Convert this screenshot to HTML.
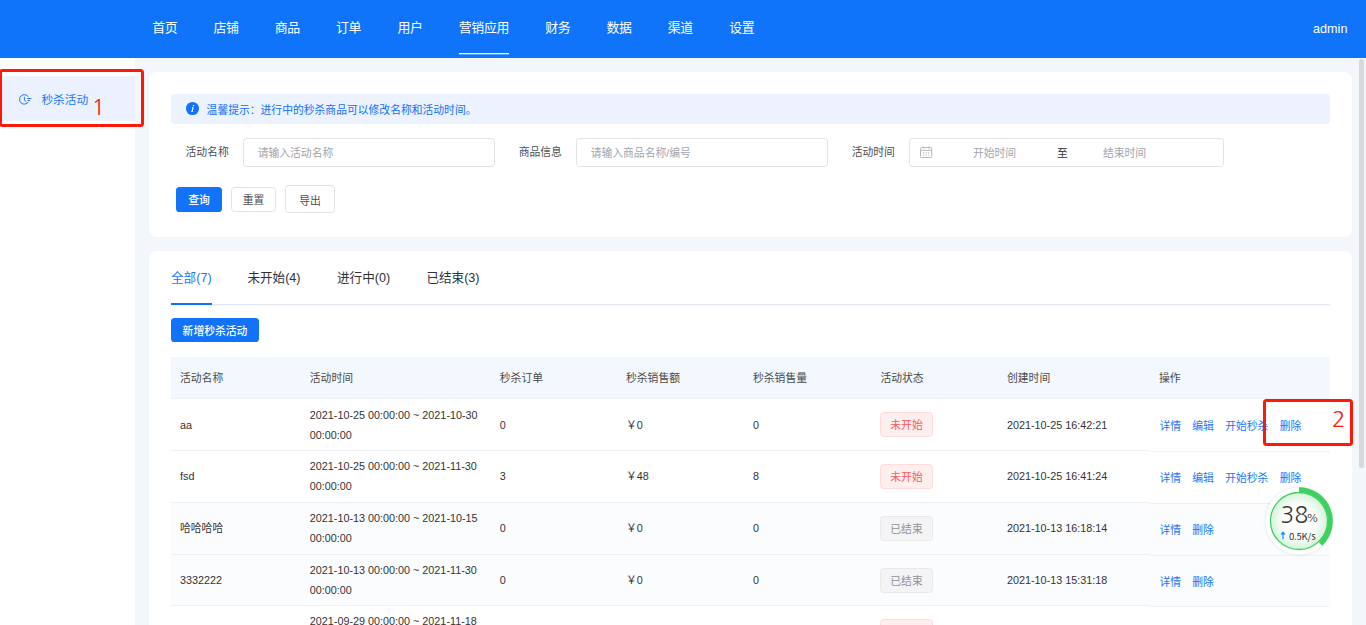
<!DOCTYPE html>
<html lang="zh-CN">
<head>
<meta charset="utf-8">
<title>秒杀活动</title>
<style>
*{box-sizing:border-box;margin:0;padding:0}
html,body{width:1366px;height:625px;overflow:hidden}
body{position:relative;background:#f3f6fa;font-family:"Liberation Sans","Noto Sans CJK SC",sans-serif;font-size:10.8px;color:#333;-webkit-font-smoothing:antialiased}
.abs{position:absolute}
/* header */
#hd{position:absolute;left:0;top:0;width:1366px;height:57.6px;background:#0f74fa}
#nav{position:absolute;left:152.2px;top:0;height:57.6px;white-space:nowrap;font-size:12.9px;letter-spacing:-0.3px;color:#fff}
#nav span{position:absolute;top:0;line-height:55.4px;display:block}
#nav .ul{position:absolute;top:53px;height:2px;background:linear-gradient(#fff 0,#fff 50%,rgba(255,255,255,.3) 50%,rgba(255,255,255,.3) 100%)}
#admin{position:absolute;right:18.6px;top:0;line-height:59px;color:#fff;font-size:12.6px}
/* sidebar */
#sb{position:absolute;left:0;top:57.6px;width:135px;height:568px;background:#fff}
#mi{position:absolute;left:0;top:18.4px;width:135px;height:45px;background:#ebf1ff;color:#1b76f8;font-size:11.7px;line-height:47.4px}
#mi svg{position:absolute;left:18px;top:17px}
#mi span{position:absolute;left:41.4px;top:0}
.rbox{position:absolute;border:3px solid #ff1708;border-radius:3.5px;z-index:20}
.rnum{position:absolute;color:#ff1708;z-index:21;font-family:"NanumGothic","Liberation Sans",sans-serif;font-size:22px;line-height:24px}
/* cards */
.card{position:absolute;left:149px;width:1203px;background:#fff;border-radius:7.5px}
#alert{position:absolute;left:171px;top:94.4px;width:1159px;height:29.6px;background:#ecf3fe;border-radius:4px;color:#1270f8;line-height:33.2px}
#alert .ic{position:absolute;left:15.2px;top:8.1px;width:12.8px;height:12.8px;border-radius:50%;background:#1272f9}
#alert .tx{position:absolute;left:35.6px;top:0;white-space:nowrap}
.lbl{position:absolute;top:138px;line-height:29px;color:#4c4e52;white-space:nowrap}
.inp{position:absolute;top:138px;height:28.8px;border:1px solid #e0e2e7;border-radius:3.6px;background:#fff;color:#a2a5ab;line-height:28.6px;white-space:nowrap}
.inp .ph{position:absolute;top:0}
.btn{position:absolute;border-radius:3.6px;text-align:center;white-space:nowrap}
.btn.pri{background:#1272f9;color:#fff;font-weight:500}
.btn.def{background:#fff;border:1px solid #e0e2e7;color:#4c4e52}
/* tabs */
#tabs span{position:absolute;top:264.7px;line-height:26px;font-size:12.6px;color:#303133;white-space:nowrap}
#tabs span.on{color:#1b76f8}
#tline{position:absolute;left:171px;top:304px;width:1159px;height:1px;background:#e4e7ed;box-shadow:0 1px 0 rgba(228,231,237,.3)}
#tbar{position:absolute;left:171px;top:303px;width:41px;height:2px;background:#1272f9}
/* table */
#th{position:absolute;left:171px;top:357px;width:1159px;height:41.5px;background:#f2f8fe;color:#4a4a4a;box-shadow:inset 0 -1px 0 #eef0f3}
#th span{position:absolute;top:0;line-height:43.4px;white-space:nowrap}
.tr{position:absolute;left:171px;width:1159px;height:52px;color:#333}
.tr>div,.tr>span{position:absolute;white-space:nowrap}
.c1{left:9px;top:0;line-height:52.6px}
.c2{left:138.8px;top:6.2px;line-height:20px}
.c3{left:328.8px;top:0;line-height:52.6px}
.c4{left:455px;top:0;line-height:52.6px}
.c5{left:582px;top:0;line-height:52.6px}
.c7{left:836px;top:0;line-height:52.6px}
.tag{left:709px;top:13px;width:53px;height:25.2px;border-radius:3.6px;border:1px solid;text-align:center;line-height:25px}
.tag.d{background:#ffeeee;border-color:#ffdcdc;color:#fa5a5a}
.tag.i{background:#f4f4f5;border-color:#e9e9eb;color:#909399}
.ops{left:988.4px;top:0;line-height:52.6px;color:#1b76f8}
.ops i{font-style:normal;margin-right:11.3px}
/* scrollbar */
#sbt{position:absolute;left:1359px;top:59px;width:5px;height:409px;border-radius:2.5px;background:#d6d8da}
</style>
</head>
<body>
<div id="hd">
  <div id="nav">
    <span style="left:0">首页</span><span style="left:61.2px">店铺</span><span style="left:122.6px">商品</span><span style="left:183.8px">订单</span><span style="left:245.2px">用户</span><span style="left:306.6px">营销应用</span><span style="left:393px">财务</span><span style="left:454.3px">数据</span><span style="left:515.6px">渠道</span><span style="left:577px">设置</span>
    <div class="ul" style="left:306.6px;width:50.4px"></div>
  </div>
  <div id="admin">admin</div>
</div>

<div id="sb">
  <div id="mi">
    <svg width="15" height="13" viewBox="0 0 15 13" fill="none" stroke="#1b76f8" stroke-width="1" stroke-linecap="round" stroke-linejoin="round"><path d="M10.18 9.36A4.8 4.8 0 1 1 10.18 3.44"/><path d="M6.4 4.2V7.2L8 8.5"/><path d="M9.5 5.5H13"/><path d="M9.8 7.4H11.6"/></svg>
    <span>秒杀活动</span>
  </div>
</div>
<div class="rbox" style="left:-1px;top:69px;width:145px;height:58px"></div>
<div class="rnum" style="left:91.7px;top:94.5px">1</div>

<div class="card" style="top:72px;height:165px"></div>
<div id="alert"><div class="ic"><svg width="12.6" height="12.6" viewBox="0 0 12.6 12.6" style="position:absolute;left:0;top:0"><path d="M7 2.9h1.25l-.25 1.25H6.75zM6.45 5.2h1.2l-.95 4.6H5.5z" fill="#fff"/><path d="M5.9 5.2h1.2v.45H5.9zM4.9 9.35h2.2v.45H4.9z" fill="#fff"/></svg></div><div class="tx">温馨提示：进行中的秒杀商品可以修改名称和活动时间。</div></div>

<div class="lbl" style="left:185.5px">活动名称</div>
<div class="inp" style="left:243.2px;width:251.8px"><span class="ph" style="left:13.5px">请输入活动名称</span></div>
<div class="lbl" style="left:518.7px">商品信息</div>
<div class="inp" style="left:576.2px;width:251.8px"><span class="ph" style="left:13.5px">请输入商品名称/编号</span></div>
<div class="lbl" style="left:851.7px">活动时间</div>
<div class="inp" style="left:909.4px;width:314.4px">
  <svg class="abs" style="left:9.7px;top:7px" width="13" height="13" viewBox="0 0 13 13" fill="none" stroke="#b4b7bd" stroke-width="1"><rect x="0.5" y="1.6" width="11.2" height="9.9" rx="0.8"/><path d="M0.5 4.4h11.2M3.2 0.4v2.2M9 0.4v2.2"/><path d="M2.9 6.8h1.3M5.45 6.8h1.3M8 6.8h1.3M2.9 9.1h1.3M5.45 9.1h1.3M8 9.1h1.3" stroke-width="0.9"/></svg>
  <span class="ph" style="left:62.6px">开始时间</span>
  <span class="ph" style="left:146.6px;color:#303133">至</span>
  <span class="ph" style="left:192.6px">结束时间</span>
</div>

<div class="btn pri" style="left:176px;top:187px;width:46px;height:25px;line-height:27px">查询</div>
<div class="btn def" style="left:231.2px;top:187px;width:44.6px;height:25px;line-height:25.6px">重置</div>
<div class="btn def" style="left:285.2px;top:185.2px;width:49.8px;height:27.6px;line-height:30.4px">导出</div>

<div class="card" style="top:251px;height:400px"></div>
<div id="tabs">
  <span class="on" style="left:171px">全部(7)</span><span style="left:247.4px">未开始(4)</span><span style="left:337px">进行中(0)</span><span style="left:426.4px">已结束(3)</span>
</div>
<div id="tline"></div><div id="tbar"></div>
<div class="btn pri" style="left:171px;top:318.2px;width:88px;height:24px;line-height:26.4px">新增秒杀活动</div>

<div id="th">
  <span style="left:9px">活动名称</span><span style="left:138.8px">活动时间</span><span style="left:328.8px">秒杀订单</span><span style="left:455px">秒杀销售额</span><span style="left:582px">秒杀销售量</span><span style="left:709.4px">活动状态</span><span style="left:836px">创建时间</span><span style="left:988px">操作</span>
</div>

<div class="abs" style="left:171px;top:502.9px;width:1159px;height:103px;background:#fafcfe"></div>
<div class="abs" style="left:171px;top:450px;width:979px;height:1px;background:#eef0f5"></div><div class="abs" style="left:1150px;top:450.8px;width:180px;height:1px;background:#eef0f5"></div>
<div class="abs" style="left:171px;top:502px;width:979px;height:1px;background:#eef0f5"></div><div class="abs" style="left:1150px;top:502.8px;width:180px;height:1px;background:#eef0f5"></div>
<div class="abs" style="left:171px;top:554px;width:979px;height:1px;background:#eef0f5"></div><div class="abs" style="left:1150px;top:554.8px;width:180px;height:1px;background:#eef0f5"></div>
<div class="abs" style="left:171px;top:605.4px;width:979px;height:1px;background:#eef0f5"></div><div class="abs" style="left:1150px;top:606.2px;width:180px;height:1px;background:#eef0f5"></div>
<div class="tr" style="top:399px">
  <span class="c1">aa</span><div class="c2">2021-10-25 00:00:00 ~ 2021-10-30<br>00:00:00</div><span class="c3">0</span><span class="c4">￥0</span><span class="c5">0</span><div class="tag d" style="top:13px">未开始</div><span class="c7">2021-10-25 16:42:21</span><span class="ops" style="top:1px"><i>详情</i><i>编辑</i><i>开始秒杀</i><i>删除</i></span>
</div>
<div class="tr" style="top:450px">
  <span class="c1">fsd</span><div class="c2">2021-10-25 00:00:00 ~ 2021-11-30<br>00:00:00</div><span class="c3">3</span><span class="c4">￥48</span><span class="c5">8</span><div class="tag d" style="top:14px">未开始</div><span class="c7">2021-10-25 16:41:24</span><span class="ops" style="top:2px"><i>详情</i><i>编辑</i><i>开始秒杀</i><i>删除</i></span>
</div>
<div class="tr" style="top:502px">
  <span class="c1">哈哈哈哈</span><div class="c2">2021-10-13 00:00:00 ~ 2021-10-15<br>00:00:00</div><span class="c3">0</span><span class="c4">￥0</span><span class="c5">0</span><div class="tag i" style="top:14px">已结束</div><span class="c7">2021-10-13 16:18:14</span><span class="ops" style="top:2px"><i>详情</i><i>删除</i></span>
</div>
<div class="tr" style="top:554px">
  <span class="c1">3332222</span><div class="c2">2021-10-13 00:00:00 ~ 2021-11-30<br>00:00:00</div><span class="c3">0</span><span class="c4">￥0</span><span class="c5">0</span><div class="tag i" style="top:13.5px">已结束</div><span class="c7">2021-10-13 15:31:18</span><span class="ops" style="top:2px"><i>详情</i><i>删除</i></span>
</div>
<div class="tr" style="top:605px">
  <div class="c2">2021-09-29 00:00:00 ~ 2021-11-18<br>00:00:00</div><div class="tag d" style="top:14px">未开始</div>
</div>
<div class="rbox" style="left:1263px;top:399px;width:90px;height:47px"></div>
<div class="rnum" style="left:1332px;top:406.6px">2</div>


<div id="wg" style="position:absolute;left:1258.5px;top:481.3px;width:80px;height:80px;z-index:30">
<svg width="80" height="80" viewBox="0 0 80 80" style="position:absolute;left:0;top:0">
  <defs><radialGradient id="wgg" cx="50%" cy="50%" r="50%"><stop offset="0" stop-color="#ffffff"/><stop offset="0.55" stop-color="#ffffff"/><stop offset="1" stop-color="#d4f3da"/></radialGradient></defs>
  <circle cx="40" cy="40" r="36" fill="#000" fill-opacity="0.015"/>
  <circle cx="40" cy="40" r="34.6" fill="#000" fill-opacity="0.03"/>
  <circle cx="40" cy="40" r="33.6" fill="#ffffff"/>
  <circle cx="40" cy="40" r="28.5" fill="url(#wgg)" stroke="#3fd060" stroke-width="1.3"/>
  <path d="M40 8.70A31.3 31.3 0 0 1 61.43 62.82" fill="none" stroke="#3fd060" stroke-width="5"/>
</svg>
<span style="position:absolute;left:22px;top:20.5px;font-family:'NanumGothic','Liberation Sans',sans-serif;font-size:22.6px;line-height:26px;color:#3a3a3a;letter-spacing:0.3px">38</span>
<span style="position:absolute;left:47.8px;top:28.3px;font-family:'NanumGothic','Liberation Sans',sans-serif;font-size:11.4px;line-height:16px;color:#3a3a3a">%</span>
<svg width="6" height="9" viewBox="0 0 6 9" style="position:absolute;left:21.6px;top:50px"><path d="M3 0.3L5.6 3.4H3.6V8.2H2.4V3.4H0.4Z" fill="#2288ee"/></svg>
<span style="position:absolute;left:30.4px;top:49px;font-family:'Noto Sans CJK SC','Liberation Sans',sans-serif;font-size:9.6px;line-height:12px;color:#333;letter-spacing:-0.2px">0.5K/s</span>
</div>
<div id="sbt"></div>
</body>
</html>
